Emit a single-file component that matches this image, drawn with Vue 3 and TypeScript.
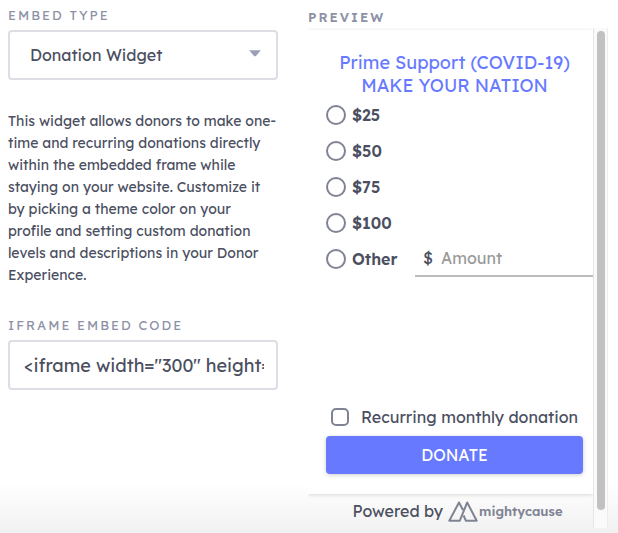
<script setup lang="ts">
import { ref } from 'vue'

const embedTypes: string[] = ['Donation Widget']
const embedType = ref<string>(embedTypes[0])
const embedCode = ref<string>('<iframe width="300" height="500" frameborder="0"></iframe>')

const levels: string[] = ['$25', '$50', '$75', '$100']
const selected = ref<string>('')
const amount = ref<string>('')
const recurring = ref<boolean>(false)
</script>

<template>
  <main class="page">
    <section class="settings">
      <label class="caption" for="embed-type">Embed type</label>
      <div class="select-wrap">
        <select id="embed-type" v-model="embedType" class="control select">
          <option v-for="type in embedTypes" :key="type" :value="type">{{ type }}</option>
        </select>
        <svg class="caret" viewBox="0 0 12 7" aria-hidden="true"><path d="M0.2 0.2H11.8L7 5.9Q6 6.8 5 5.9Z" fill="#9a9fb5" /></svg>
      </div>
      <p class="description">
        This widget allows donors to make one-time and recurring donations directly within the embedded frame while
        staying on your website. Customize it by picking a theme color on your profile and setting custom donation
        levels and descriptions in your Donor Experience.
      </p>
      <label class="caption" for="embed-code">Iframe embed code</label>
      <input id="embed-code" v-model="embedCode" class="control code" type="text" readonly />
    </section>

    <section class="preview">
      <h2 class="caption strong">Preview</h2>
      <div class="frame">
        <div class="viewport">
          <form class="card" @submit.prevent>
            <h3 class="title">Prime Support (COVID-19)<br />MAKE YOUR NATION</h3>
            <div class="levels">
              <label v-for="level in levels" :key="level" class="level">
                <input v-model="selected" class="radio" type="radio" name="level" :value="level" />
                {{ level }}
              </label>
              <div class="other">
                <label class="level">
                  <input v-model="selected" class="radio" type="radio" name="level" value="other" />
                  Other
                </label>
                <label class="amount">
                  <span>$</span>
                  <input v-model="amount" type="text" placeholder="Amount" aria-label="Amount" />
                </label>
              </div>
            </div>
            <label class="recurring">
              <input v-model="recurring" class="checkbox" type="checkbox" />
              Recurring monthly donation
            </label>
            <button class="donate" type="submit">DONATE</button>
          </form>
          <footer class="powered">
            <span>Powered by</span>
            <a class="brand" href="#">
              <svg class="mark" viewBox="0 0 30 21" aria-hidden="true">
                <path d="M15 9L11 1.5L1.3 19.7H11.8L19.2 1.5L28.7 19.7H17.8L15.6 14.5" />
              </svg>
              <span>mightycause</span>
            </a>
          </footer>
        </div>
        <div class="track"><div class="thumb"></div></div>
      </div>
    </section>
  </main>
</template>

<style>
body {
  margin: 0;
}
</style>

<style scoped>
.page {
  box-sizing: border-box;
  min-height: 100vh;
  display: grid;
  grid-template-columns: 9fr 10fr;
  column-gap: 30px;
  padding: 6px 10px 5px 8px;
  background: linear-gradient(to top, #f1f1f1, #ffffff 50px);
  color: #4b4f5f;
  font-family: Lexend, "Lexend Deca", "Noto Sans", sans-serif;
  font-size: 16px;
}

.settings,
.preview {
  display: flex;
  flex-direction: column;
  min-width: 0;
}

.caption {
  margin: 0;
  color: #8d91a5;
  font-size: 13px;
  font-weight: 400;
  line-height: 18px;
  letter-spacing: 2px;
  text-transform: uppercase;
}

.strong {
  margin-top: 2px;
  font-weight: 600;
}

.control {
  box-sizing: border-box;
  width: 100%;
  height: 50px;
  margin: 0;
  border: 2px solid #dddde5;
  border-radius: 4px;
  outline: none;
  background: #ffffff;
  color: inherit;
  font-family: inherit;
}

.select-wrap {
  position: relative;
  margin-top: 6px;
}

.select {
  appearance: none;
  padding: 0 36px 0 20px;
  font-size: 16px;
}

.caret {
  position: absolute;
  top: 20px;
  right: 17px;
  width: 12px;
  height: 7px;
  pointer-events: none;
}

.description {
  margin: 30px 0;
  font-size: 14px;
  line-height: 22px;
}

.code {
  margin-top: 6px;
  padding: 0 12px 0 14px;
  font-size: 18px;
}

.frame {
  display: flex;
  flex: 1;
  margin-top: 2px;
}

.viewport {
  flex: 1;
  min-width: 0;
  overflow: hidden;
}

.card {
  display: flex;
  flex-direction: column;
  margin-top: 2px;
  padding: 21px 10px 20px 18px;
  background: #ffffff;
  box-shadow: 0 1px 4px rgba(0, 0, 0, 0.15);
}

.title {
  margin: 0;
  color: #677aff;
  font-size: 18px;
  font-weight: 400;
  line-height: 23px;
  text-align: center;
}

.levels {
  margin-bottom: 129px;
}

.level {
  display: flex;
  align-items: center;
  gap: 6px;
  height: 36px;
  font-weight: 600;
}

.radio,
.checkbox {
  appearance: none;
  box-sizing: border-box;
  flex: none;
  margin: 0;
  border: 2px solid #7f8394;
  background: #ffffff;
}

.radio {
  width: 20px;
  height: 20px;
  border-radius: 50%;
}

.radio:checked,
.checkbox:checked {
  background: #677aff;
}

.other {
  display: flex;
  justify-content: space-between;
  height: 34px;
  margin-right: -10px;
}

.amount {
  box-sizing: border-box;
  display: flex;
  align-items: center;
  gap: 8px;
  flex: 0 0 178px;
  min-width: 0;
  height: 36px;
  padding-left: 8px;
  border-bottom: 2px solid #bdbdbd;
}

.amount input {
  width: 100%;
  min-width: 0;
  padding: 0;
  border: 0;
  outline: none;
  background: transparent;
  color: inherit;
  font-family: inherit;
  font-size: 16px;
}

.amount input::placeholder {
  color: #999999;
}

.recurring {
  display: flex;
  align-items: center;
  gap: 12px;
  height: 26px;
  padding-left: 5px;
  white-space: nowrap;
}

.checkbox {
  width: 18px;
  height: 18px;
  border-radius: 5px;
}

.donate {
  height: 38px;
  margin-top: 6px;
  padding: 0;
  border: 0;
  border-radius: 4px;
  background: #677aff;
  box-shadow: 0 1px 4px rgba(0, 0, 0, 0.2);
  color: #ffffff;
  font-family: inherit;
  font-size: 16px;
}

.powered {
  display: flex;
  align-items: center;
  justify-content: center;
  gap: 5px;
  height: 34px;
  padding-left: 14px;
}

.brand {
  display: flex;
  align-items: center;
  gap: 1px;
  color: #7f8394;
  font-size: 13px;
  font-weight: 600;
  text-decoration: none;
}

.mark {
  width: 30px;
  height: 21px;
  fill: none;
  stroke: currentColor;
  stroke-width: 2;
  stroke-linejoin: round;
}

.track {
  box-sizing: border-box;
  width: 15px;
  padding: 3px 3px 18px;
  border-left: 1px solid #e6e6e6;
  border-right: 1px solid #ededed;
  background: #fafafa;
}

.thumb {
  width: 8px;
  height: 100%;
  border-radius: 4px;
  background: #c1c1c1;
}
</style>
